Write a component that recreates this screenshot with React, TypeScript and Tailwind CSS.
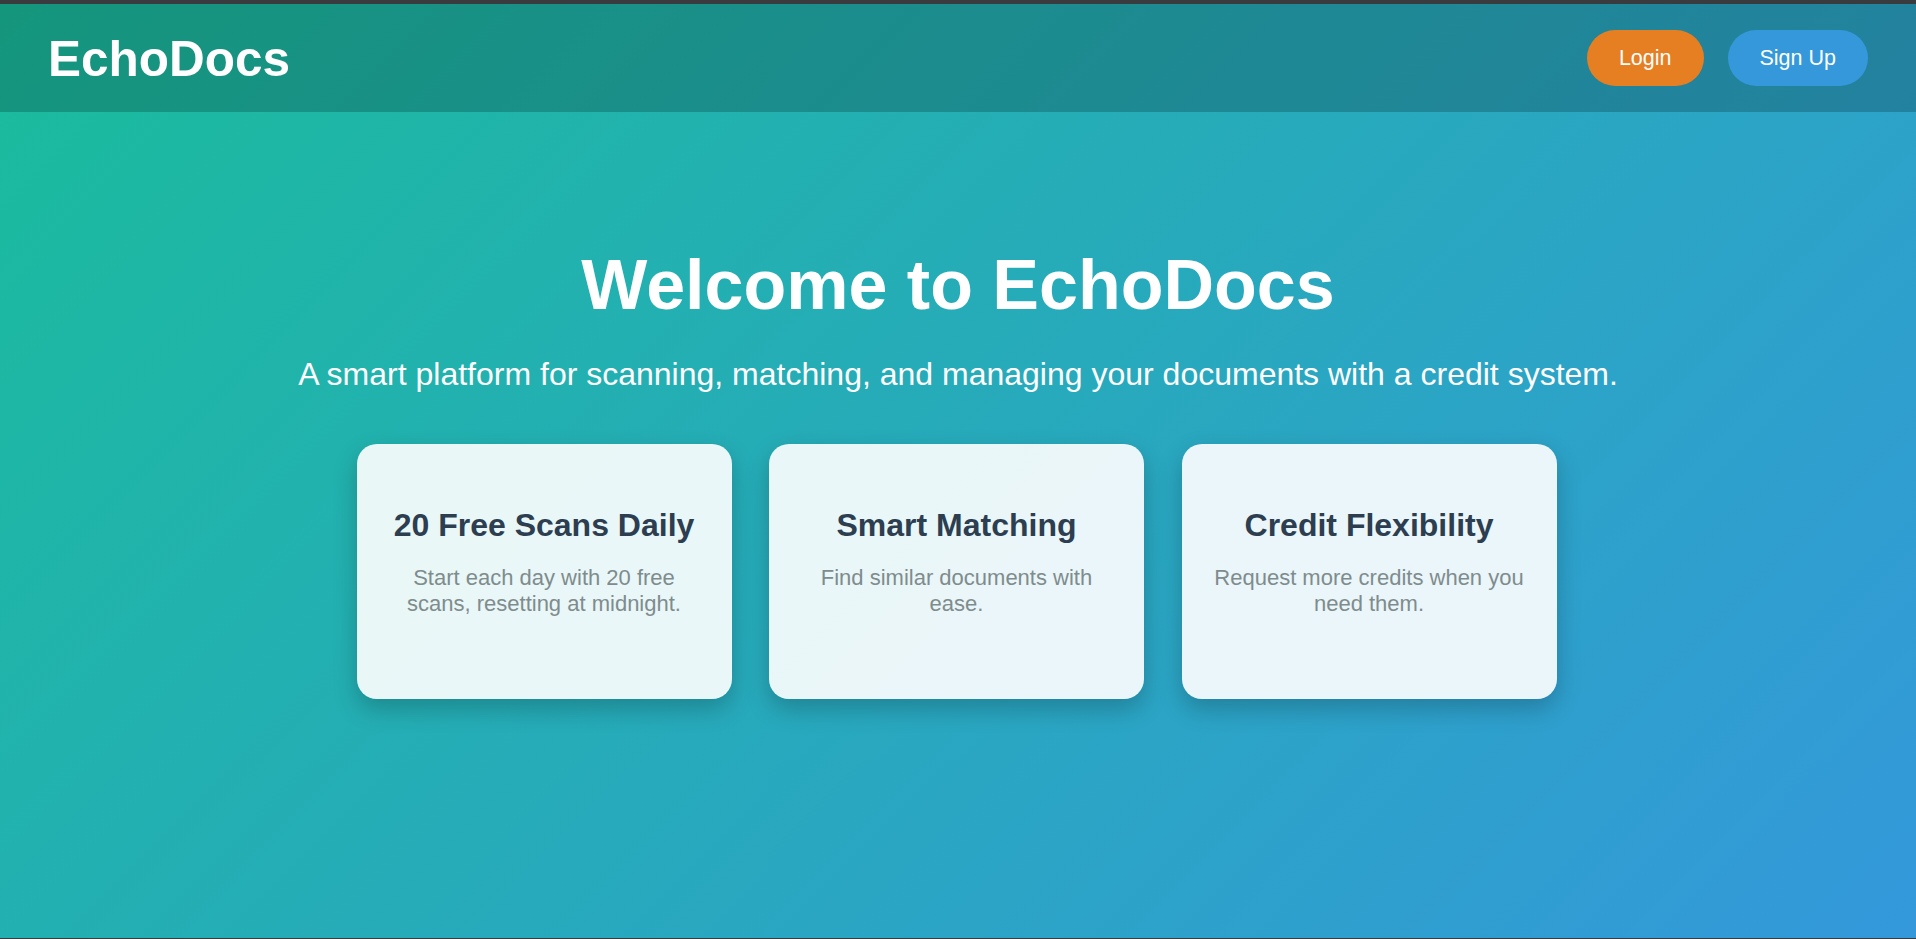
import type { ReactNode } from "react"

interface Feature {
  title: string
  description: ReactNode
}

const features: Feature[] = [
  { title: "20 Free Scans Daily", description: "Start each day with 20 free scans, resetting at midnight." },
  { title: "Smart Matching", description: "Find similar documents with ease." },
  { title: "Credit Flexibility", description: "Request more credits when you need them." },
]

function FeatureCard({ feature }: { feature: Feature }) {
  return (
    <div className="flex h-[255px] w-[375px] flex-col items-center rounded-[20px] bg-white/90 px-[30px] pt-[63px] text-center shadow-[0_10px_25px_rgba(0,0,0,0.22)]">
      <h3 className="text-[32px] font-bold leading-[normal] text-[#2c3e50]">{feature.title}</h3>
      <p className="mt-[21px] text-[22px] leading-[normal] text-[#7f8c8d]">{feature.description}</p>
    </div>
  )
}

export default function App() {
  return (
    <div className="flex h-screen flex-col bg-[#3a3b3f] font-['Liberation_Sans',Arial,sans-serif]">
      <div className="h-[4px] shrink-0" />
      <div className="flex flex-1 flex-col bg-[linear-gradient(135deg,#1abc9c_0%,#3498db_100%)]">
        <header className="flex h-[108px] shrink-0 items-center justify-between bg-black/20 px-[48px]">
          <h1 className="text-[49.5px] font-bold leading-[normal] text-white">EchoDocs</h1>
          <nav className="flex items-center gap-[24px]">
            <button className="h-[56px] rounded-full bg-[#e67e22] px-[32px] text-[21.5px] text-white">Login</button>
            <button className="h-[56px] rounded-full bg-[#3498db] px-[32px] text-[21.5px] text-white">Sign Up</button>
          </nav>
        </header>

        <main className="flex flex-1 flex-col items-center pt-[133px] text-center">
          <h2 className="text-[70px] font-bold leading-[normal] text-white">Welcome to EchoDocs</h2>
          <p className="mt-[31px] text-[32px] leading-[normal] text-white">
            A smart platform for scanning, matching, and managing your documents with a credit system.
          </p>
          <div className="mt-[51px] flex gap-[37.5px] pr-[3px]">
            {features.map((feature) => (
              <FeatureCard key={feature.title} feature={feature} />
            ))}
          </div>
        </main>
      </div>
      <div className="h-px shrink-0" />
    </div>
  )
}
